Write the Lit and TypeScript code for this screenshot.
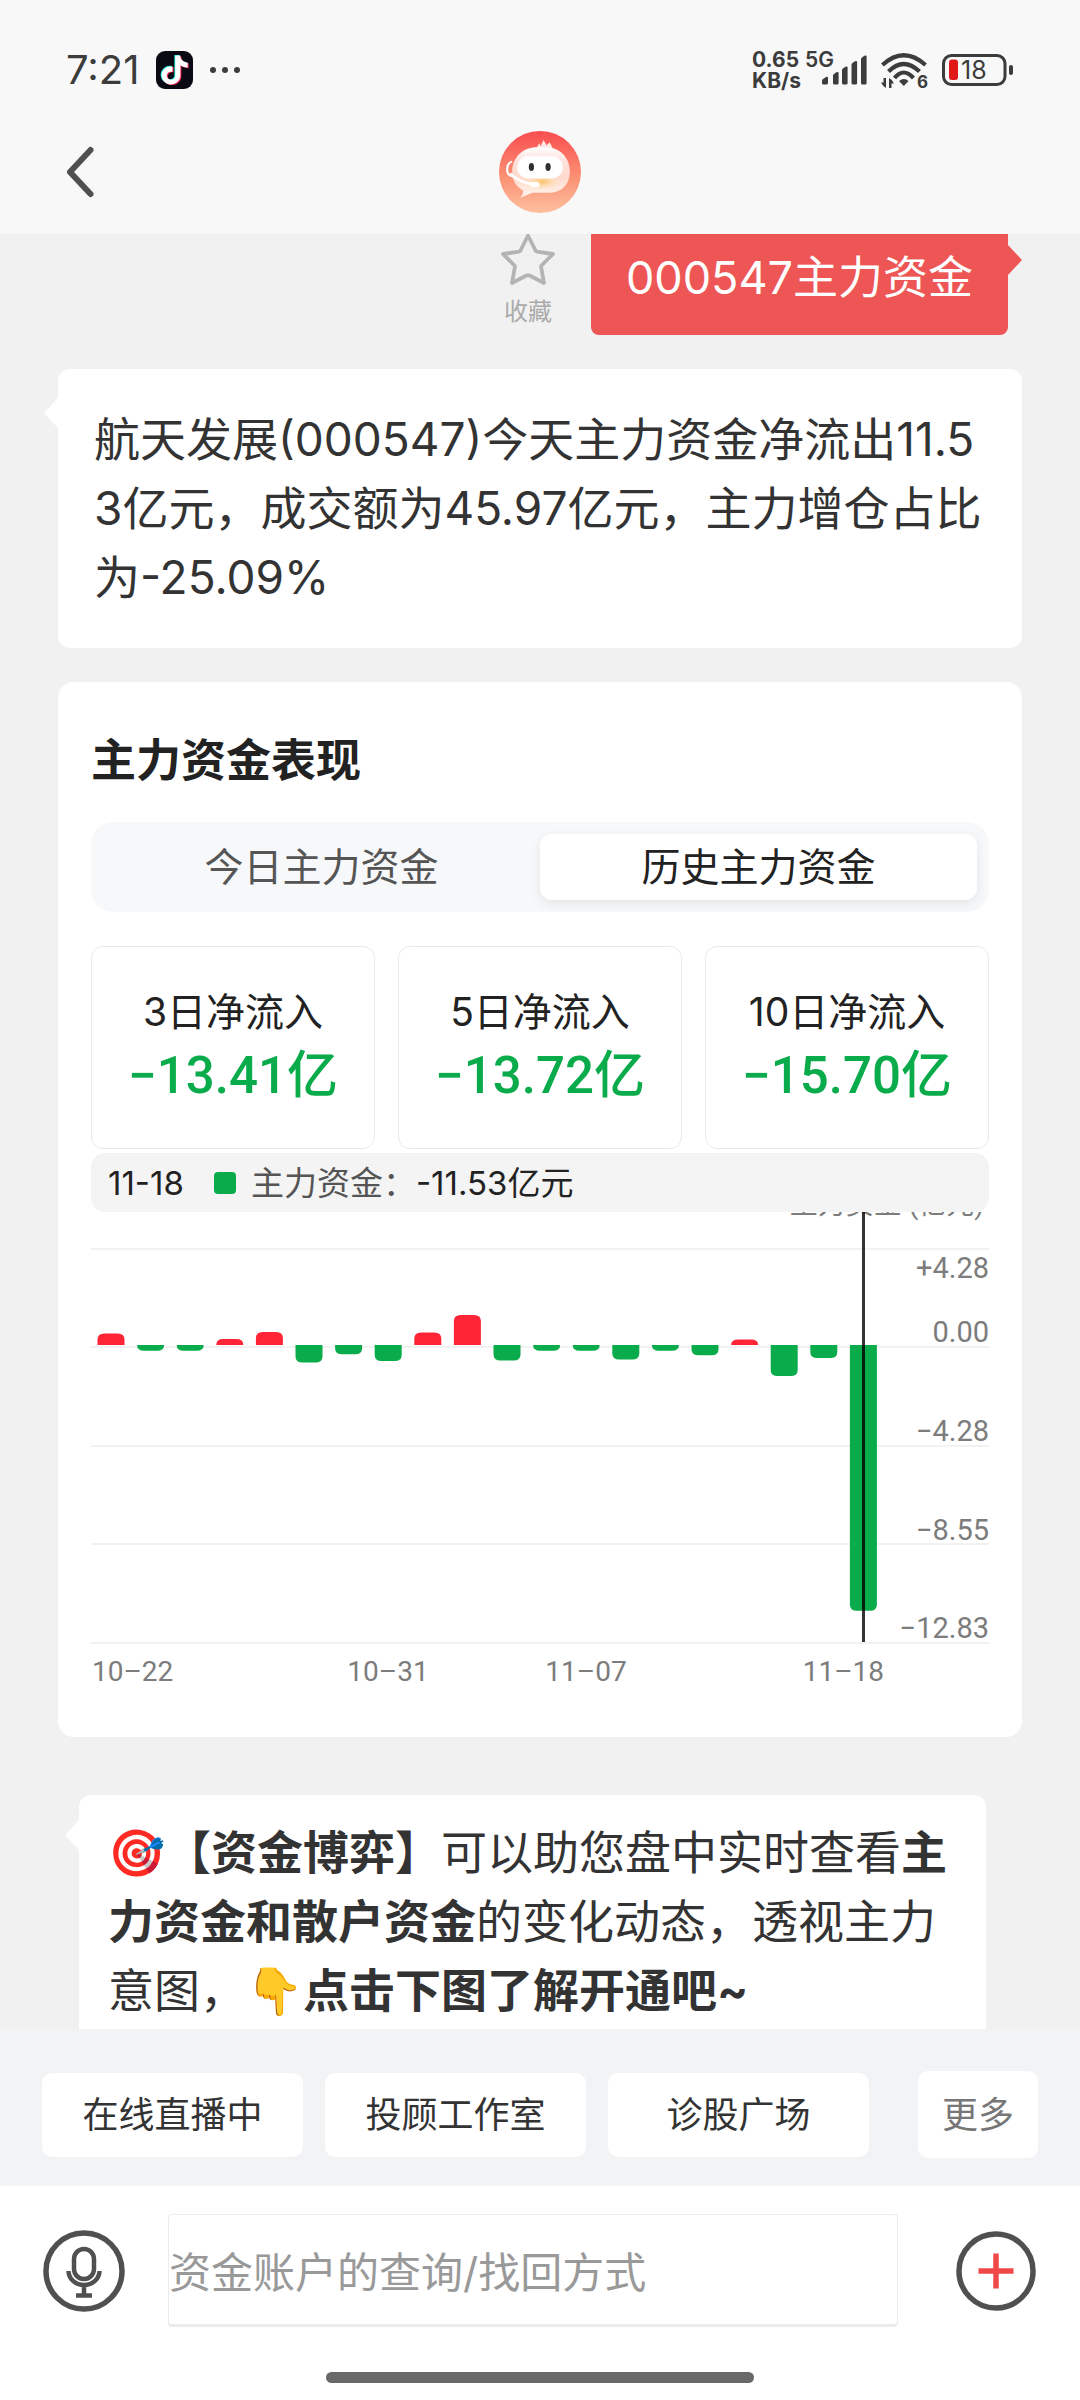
import { LitElement, html, svg, css } from "lit";
import { customElement, property } from "lit/decorators.js";

interface DayFlow {
  date: string;
  value: number;
}

const FLOWS: DayFlow[] = [
  { date: "10–22", value: 0.5 },
  { date: "", value: -0.25 },
  { date: "", value: -0.25 },
  { date: "", value: 0.26 },
  { date: "", value: 0.56 },
  { date: "", value: -0.76 },
  { date: "", value: -0.4 },
  { date: "10–31", value: -0.69 },
  { date: "", value: 0.54 },
  { date: "", value: 1.3 },
  { date: "", value: -0.67 },
  { date: "", value: -0.25 },
  { date: "11–07", value: -0.25 },
  { date: "", value: -0.63 },
  { date: "", value: -0.25 },
  { date: "", value: -0.45 },
  { date: "", value: 0.24 },
  { date: "", value: -1.35 },
  { date: "", value: -0.56 },
  { date: "11–18", value: -11.53 },
];

const NOTE =
  "M12.525.02c1.31-.02 2.61-.01 3.91-.02.08 1.53.63 3.09 1.75 4.17 1.12 1.11 2.7 1.62 4.24 1.79v4.03c-1.44-.05-2.89-.35-4.2-.97-.57-.26-1.1-.59-1.62-.93-.01 2.92.01 5.84-.02 8.75-.08 1.4-.54 2.79-1.35 3.94-1.31 1.92-3.58 3.17-5.91 3.21-1.43.08-2.86-.31-4.08-1.03-2.02-1.19-3.44-3.37-3.65-5.71-.02-.5-.03-1-.01-1.49.18-1.9 1.12-3.72 2.58-4.96 1.66-1.44 3.98-2.13 6.15-1.72.02 1.48-.04 2.96-.04 4.44-.99-.32-2.15-.23-3.02.37-.63.41-1.11 1.04-1.36 1.75-.21.51-.15 1.07-.14 1.61.24 1.64 1.82 3.02 3.5 2.87 1.12-.01 2.19-.66 2.77-1.61.19-.33.4-.67.41-1.06.1-1.79.06-3.57.07-5.36.01-4.03-.01-8.05.02-12.07z";

@customElement("status-bar")
export class StatusBar extends LitElement {
  static styles = css`
    :host {
      display: flex;
      align-items: center;
      height: 78px;
      padding: 0 66px;
      color: #3c3c3c;
    }
    svg {
      display: block;
      flex: none;
      overflow: visible;
    }
    .time {
      font-size: 40px;
      line-height: 48px;
      margin-right: 17px;
    }
    .dots {
      display: flex;
      gap: 6px;
      margin-left: 17px;
    }
    .dot {
      width: 6px;
      height: 6px;
      border-radius: 50%;
      background: #3c3c3c;
    }
    .right {
      display: flex;
      align-items: center;
      margin-left: auto;
    }
    .speed {
      font-size: 21px;
      line-height: 21px;
      font-weight: 700;
      margin-right: 4px;
    }
    .wifi {
      margin: 0 13px 0 12px;
    }
    .small {
      font-weight: 600;
      font-size: 21px;
    }
    .tiny {
      font-weight: 700;
      font-size: 17px;
    }
    .level {
      font-size: 25px;
    }
  `;

  render() {
    return html`
      <span class="time">7:21</span>
      <svg width="37" height="38" viewBox="0 0 37 38" aria-hidden="true">
        <rect width="37" height="38" rx="9" fill="#0a0a14" />
        <g transform="translate(3.500 4.500) scale(1.25 1.2)">
          <path d=${NOTE} fill="#25f4ee" transform="translate(-.6 -.4)" />
          <path d=${NOTE} fill="#fe2c55" transform="translate(.9 .6)" />
          <path d=${NOTE} fill="#fff" transform="translate(.1 .1)" />
        </g>
      </svg>
      <div class="dots"><i class="dot"></i><i class="dot"></i><i class="dot"></i></div>
      <div class="right">
        <div class="speed">0.65<br />KB/s</div>
        <svg width="64" height="40" viewBox="0 0 64 40" fill="#3c3c3c">
          <text class="small" x="0" y="17">5G</text>
          <path
            d="M17 30.5q0-1 1-1.600l3-1.900q2-.6 2 1v5q0 1.500-1.500 1.500h-3q-1.500 0-1.500-1.500z M28 25.500q0-1.500 4-3.500q1.600-.5 1.600 1v10q0 1.500-1.500 1.500h-2.600q-1.500 0-1.500-1.500z M37 20q0-1.500 4-3.500q1.600-.5 1.600 1v15.500q0 1.500-1.500 1.500h-2.600q-1.500 0-1.500-1.500z M46.500 14.500q0-1.500 4-3.500q1.600-.5 1.600 1v21q0 1.500-1.500 1.500h-2.600q-1.500 0-1.500-1.500z M56 9q0-1.500 4-3.500q1.600-.5 1.600 1v26.500q0 1.500-1.500 1.500h-2.600q-1.500 0-1.500-1.500z"
          />
        </svg>
        <svg class="wifi" width="48" height="40" viewBox="0 0 48 40" fill="none" stroke="#3c3c3c" stroke-width="4.200">
          <path d="M1.500 15Q22.600-4.500 44.500 15M7.500 21.500Q22.600 6.500 38.500 21.500M13.500 28Q22.600 17 32.500 28" />
          <path d="M18 31q5-4 9.500 0l-4.700 5z" fill="#3c3c3c" stroke="none" />
          <path d="M0 32.500h2.500V28h2.500v10q-3-1.500-5-5.500zM8 28q3.500 1.500 5 5.500h-2.500v4.500H8z" fill="#3c3c3c" stroke="none" />
          <text class="tiny" x="36" y="38" fill="#3c3c3c" stroke="none">6</text>
        </svg>
        <svg width="72" height="36" viewBox="0 0 72 36">
          <rect x="1.500" y="3.500" width="61.500" height="29" rx="8" fill="none" stroke="#3c3c3c" stroke-width="3" />
          <rect x="7" y="7.500" width="9" height="20.500" rx="3" fill="#e01818" />
          <rect x="67" y="13" width="4" height="10" rx="2" fill="#3c3c3c" />
          <text class="level" x="19" y="27" fill="#3c3c3c">18</text>
        </svg>
      </div>
    `;
  }
}

@customElement("flow-chart")
export class FlowChart extends LitElement {
  @property({ attribute: false }) flows: DayFlow[] = [];

  static styles = css`
    :host {
      display: block;
    }
    .chart {
      display: block;
      width: 100%;
      overflow: hidden;
    }
    .axis {
      font-family: Roboto, "Noto Sans CJK SC", sans-serif;
      font-size: 29px;
      fill: #7c7c7c;
    }
    .unit,
    .date {
      font-size: 28px;
    }
  `;

  private bar(value: number, index: number) {
    const step = 39.6;
    const x = 6.5 + index * step;
    const w = 27;
    const zero = 133;
    const h = Math.abs(value) * 23.04;
    const ry = Math.min(6, h);
    const s = value > 0 ? -1 : 1;
    const edge = zero + s * h;
    const d = `M${x} ${zero}V${edge - s * ry}Q${x} ${edge} ${x + 7} ${edge}H${x + w - 7}Q${x + w} ${edge} ${x + w} ${edge - s * ry}V${zero}Z`;
    return svg`<path d=${d} fill=${value > 0 ? "#ff2436" : "#0aab4b"} />`;
  }

  render() {
    const labels = ["+4.28", "0.00", "−4.28", "−8.55", "−12.83"];
    const baselines = [66, 130, 229, 328, 426];
    const lines = [36, 134, 233, 331, 430];
    const last = this.flows.length - 1;
    return html`
      <svg class="chart" viewBox="0 0 898 488" role="img" aria-label="主力资金">
        <text class="axis unit" x="893" y="2" text-anchor="end">主力资金 (亿元)</text>
        ${lines.map((y) => svg`<rect x="0" y=${y} width="898" height="2" fill="#f2f2f2" />`)}
        ${this.flows.map((f, i) => this.bar(f.value, i))}
        <rect x="771" y="0" width="3" height="430" fill="#000" fill-opacity="0.8" />
        ${labels.map((t, i) => svg`<text class="axis" x="898" y=${baselines[i]} text-anchor="end">${t}</text>`)}
        ${this.flows.map((f, i) =>
          f.date
            ? svg`<text class="axis date" y="469"
                x=${i === 0 ? 1 : i === last ? 793 : 19.8 + i * 39.6}
                text-anchor=${i === 0 ? "start" : i === last ? "end" : "middle"}>${f.date}</text>`
            : null
        )}
      </svg>
    `;
  }
}

@customElement("app-root")
export class AppRoot extends LitElement {
  static styles = css`
    :host {
      display: flex;
      flex-direction: column;
      height: 100vh;
      overflow: hidden;
      background: #f1f1f1;
      color: #333;
      font-family: Inter, "Noto Sans CJK SC", sans-serif;
    }
    * {
      box-sizing: border-box;
    }
    button,
    input {
      font: inherit;
      color: inherit;
      border: 0;
      padding: 0;
      margin: 0;
      background: none;
    }
    svg {
      display: block;
    }
    p,
    h2 {
      margin: 0;
    }
    .header {
      flex: none;
      padding-top: 31px;
      background: #f8f8f8;
    }
    .nav {
      display: grid;
      grid-template-columns: 1fr auto 1fr;
      align-items: center;
      height: 125px;
      padding: 0 64px;
    }
    .back {
      justify-self: start;
    }
    .chat {
      flex: 1;
      min-height: 0;
      overflow: hidden;
      display: flex;
      flex-direction: column;
      padding: 0 58px;
    }
    .chat > * {
      flex: none;
    }
    .asked {
      display: flex;
      justify-content: flex-end;
      align-items: flex-start;
      gap: 36px;
      margin: 0 14px 34px 0;
    }
    .fav {
      display: flex;
      flex-direction: column;
      align-items: center;
      gap: 8px;
      font-size: 24px;
      line-height: 36px;
      color: #aaa;
    }
    .ask {
      position: relative;
      padding: 9px 35px 23px;
      border-radius: 0 0 8px 8px;
      background: #ee5555;
      color: #fff;
      font-size: 45px;
      line-height: 69px;
    }
    .ask::after {
      content: "";
      position: absolute;
      left: 100%;
      top: 11px;
      border: solid transparent;
      border-width: 15px 0 15px 14px;
      border-left-color: #ee5555;
    }
    .bubble {
      position: relative;
      background: #fff;
      border-radius: 12px;
      font-size: 46px;
      line-height: 69px;
    }
    .bubble::before {
      content: "";
      position: absolute;
      right: 100%;
      top: 29px;
      border: solid transparent;
      border-width: 15px 14px 15px 0;
      border-right-color: #fff;
    }
    .answer {
      padding: 36px;
      white-space: nowrap;
      margin-bottom: 34px;
    }
    .promo {
      margin: 58px 36px 0 21px;
      padding: 23px 29px 60px;
      white-space: nowrap;
    }
    .promo::before {
      top: 25px;
    }
    .panel {
      background: #fff;
      border-radius: 16px;
      padding: 44px 33px 37px;
    }
    .title {
      color: #222;
      font-size: 45px;
      line-height: 70px;
      font-weight: 700;
    }
    .tabs {
      display: grid;
      grid-template-columns: 1fr 1fr;
      margin-top: 26px;
      padding: 12px;
      border-radius: 22px;
      background: #f7f8fa;
    }
    .tab {
      height: 66px;
      border-radius: 12px;
      font-size: 39px;
      line-height: 58px;
      color: #555;
    }
    .tab.on {
      background: #fff;
      color: #222;
      box-shadow: 0 4px 12px rgba(0, 0, 0, 0.08);
    }
    .stats {
      display: grid;
      grid-template-columns: repeat(3, 1fr);
      gap: 23px;
      margin-top: 34px;
    }
    .stat {
      height: 203px;
      padding-top: 35px;
      border: 1px solid #e9e9e9;
      border-radius: 12px;
      text-align: center;
      white-space: nowrap;
    }
    .stat-name {
      font-size: 39px;
      line-height: 60px;
      color: #222;
    }
    .stat-value {
      font-family: Roboto, "Noto Sans CJK SC", sans-serif;
      font-size: 51px;
      line-height: 68px;
      font-weight: 500;
      color: #0aab4b;
    }
    .legend {
      display: flex;
      align-items: center;
      height: 59px;
      margin-top: 4px;
      padding: 0 17px;
      border-radius: 14px;
      background: #f4f4f4;
      color: #222;
      font-size: 33px;
      line-height: 50px;
      white-space: nowrap;
    }
    .swatch {
      width: 22px;
      height: 22px;
      margin: 0 15px 0 30px;
      border-radius: 4px;
      background: #0aab4b;
    }
    .legend-name {
      color: #555;
    }
    .quick {
      flex: none;
      display: flex;
      align-items: center;
      gap: 49px;
      height: 157px;
      padding: 14px 42px 0;
      background: #f2f3f5;
      font-size: 36px;
      line-height: 54px;
      white-space: nowrap;
    }
    .quick-list {
      flex: 1;
      display: grid;
      grid-template-columns: repeat(3, 1fr);
      gap: 22px;
    }
    .chip {
      height: 84px;
      border-radius: 10px;
      background: #fff;
    }
    .more {
      width: 120px;
      height: 87px;
      color: #777;
    }
    .composer {
      flex: none;
      padding: 28px 44px 17px 43px;
      background: #fff;
    }
    .entry {
      display: flex;
      align-items: center;
    }
    .field {
      flex: 1;
      min-width: 0;
      height: 113px;
      margin: 0 58px 0 43px;
      padding: 5px 0 0;
      border: 1px solid #ebecec;
      border-bottom-width: 3px;
      border-radius: 4px;
      font-size: 42px;
    }
    .field::placeholder {
      color: #999;
      opacity: 1;
    }
    .home {
      width: 428px;
      height: 11px;
      margin: 45px auto 0;
      border-radius: 6px;
      background: #696969;
    }
  `;

  private avatar() {
    return html`
      <svg width="82" height="82" viewBox="0 0 81 81" role="img" aria-label="智能客服">
        <defs>
          <linearGradient id="bg" x1="0" y1="0" x2="0" y2="1">
            <stop offset="0" stop-color="#f94d50" />
            <stop offset=".55" stop-color="#fb8f72" />
            <stop offset="1" stop-color="#fdc0a0" />
          </linearGradient>
          <linearGradient id="head" x1="0" y1="0" x2="0" y2="1">
            <stop offset="0" stop-color="#fff" />
            <stop offset=".25" stop-color="#ffe2de" />
            <stop offset=".6" stop-color="#ffd9cc" />
            <stop offset="1" stop-color="#fff6ee" />
          </linearGradient>
          <radialGradient id="glow" cx=".5" cy=".4" r=".5">
            <stop offset="0" stop-color="#fbc064" />
            <stop offset="1" stop-color="#fff1dc" stop-opacity="0" />
          </radialGradient>
        </defs>
        <circle cx="40.500" cy="40.500" r="40.500" fill="url(#bg)" />
        <path d="M37 20q0-5 3-8l1 3 3-6 3 5 3-3q3 4 3 9z" fill="#ffe6e2" />
        <path
          d="M38 16h8c14 0 24 10 24 24 0 13-8 21-21 21H33l-12 5q3-3 3-7c-7-4-11-10-11-18 0-15 10-25 25-25z"
          fill="url(#head)"
        />
        <ellipse cx="43" cy="52" rx="20" ry="9" fill="url(#glow)" />
        <rect x="18" y="25" width="45" height="22" rx="11" fill="#fff" />
        <path d="M13 30q-5 2-5 8t6 7" fill="none" stroke="#fff" stroke-width="2" />
        <path d="M11 42q9 9 24 11" fill="none" stroke="#fff" stroke-width="2.500" />
        <rect x="31" y="50.500" width="9" height="5" rx="2.500" fill="#fff" />
        <ellipse cx="32" cy="35.500" rx="2.600" ry="4" fill="#303030" />
        <ellipse cx="48.500" cy="35.500" rx="2.600" ry="4" fill="#303030" />
      </svg>
    `;
  }

  render() {
    const stats = [
      ["3日净流入", "−13.41亿"],
      ["5日净流入", "−13.72亿"],
      ["10日净流入", "−15.70亿"],
    ];
    return html`
      <header class="header">
        <status-bar></status-bar>
        <nav class="nav">
          <button class="back" aria-label="返回">
            <svg width="32" height="54" viewBox="0 0 32 54" fill="none" stroke="#505050" stroke-width="6" stroke-linecap="round" stroke-linejoin="round">
              <path d="M26.500 5L6 27l20.500 22" />
            </svg>
          </button>
          ${this.avatar()}
        </nav>
      </header>

      <main class="chat">
        <div class="asked">
          <button class="fav">
            <svg width="54" height="52" viewBox="0 0 54 52" fill="none" stroke="#b4b4b4" stroke-width="3.800" stroke-linejoin="round">
              <path d="M27 1.500L34.500 16.500Q35 17.500 36 17.700L52 20L40.500 31.500Q40 32.200 40.200 33.500L43 49L28.500 41.500Q27 40.800 25.500 41.500L11 49L13.800 33.500Q14 32.200 13.500 31.500L2 20L18 17.700Q19 17.500 19.500 16.500Z" />
            </svg>
            收藏
          </button>
          <div class="ask">000547主力资金</div>
        </div>

        <p class="bubble answer">
          航天发展(000547)今天主力资金净流出11.5<br />3亿元，成交额为45.97亿元，主力增仓占比<br />为-25.09%
        </p>

        <section class="panel">
          <h2 class="title">主力资金表现</h2>
          <div class="tabs" role="tablist">
            <button class="tab" role="tab" aria-selected="false">今日主力资金</button>
            <button class="tab on" role="tab" aria-selected="true">历史主力资金</button>
          </div>
          <div class="stats">
            ${stats.map(
              ([name, value]) => html`
                <div class="stat">
                  <div class="stat-name">${name}</div>
                  <div class="stat-value">${value}</div>
                </div>
              `
            )}
          </div>
          <div class="legend">
            <span>11-18</span>
            <i class="swatch"></i>
            <span class="legend-name">主力资金：</span>
            <span>-11.53亿元</span>
          </div>
          <flow-chart .flows=${FLOWS}></flow-chart>
        </section>

        <p class="bubble promo">
          🎯<b>【资金博弈】</b>可以助您盘中实时查看<b>主<br />力资金和散户资金</b>的变化动态，透视主力<br />意图，👇<b>点击下图了解开通吧~</b>
        </p>
      </main>

      <div class="quick">
        <div class="quick-list">
          <button class="chip">在线直播中</button>
          <button class="chip">投顾工作室</button>
          <button class="chip">诊股广场</button>
        </div>
        <button class="chip more">更多</button>
      </div>

      <footer class="composer">
        <div class="entry">
          <button aria-label="语音输入">
            <svg width="82" height="82" viewBox="0 0 82 82" fill="none" stroke="#505050">
              <circle cx="41" cy="41" r="38" stroke-width="5.500" />
              <rect x="31" y="19" width="20" height="30" rx="10" stroke-width="4.500" />
              <path d="M25.500 41a15.500 14 0 0 0 31 0M41 55v10M33 65.500h16" stroke-width="4.500" />
            </svg>
          </button>
          <input class="field" type="text" aria-label="输入问题" placeholder="资金账户的查询/找回方式" />
          <button aria-label="更多功能">
            <svg width="80" height="80" viewBox="0 0 80 80" fill="none">
              <circle cx="40" cy="40" r="37" stroke="#505050" stroke-width="5.500" />
              <path d="M40 22.500v35M22.500 40h35" stroke="#f04848" stroke-width="5.500" />
            </svg>
          </button>
        </div>
        <div class="home"></div>
      </footer>
    `;
  }
}
